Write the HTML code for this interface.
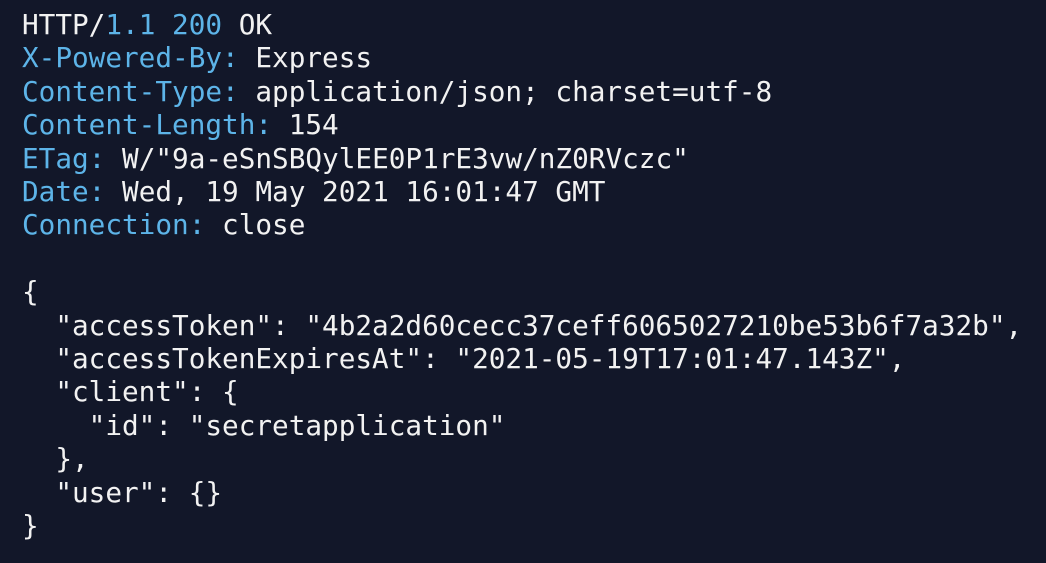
<!DOCTYPE html>
<html><head><meta charset="utf-8"><style>
html,body{margin:0;padding:0;background:#121729;width:1046px;height:563px;overflow:hidden}
pre{margin:0;position:absolute;left:22px;top:8px;font-family:"DejaVu Sans Mono","Liberation Mono",monospace;font-size:27.7px;line-height:33.4px;color:#f2f2f2;white-space:pre}
.b{color:#5db4e8}
</style></head><body><pre>HTTP/<span class="b">1.1</span> <span class="b">200</span> OK
<span class="b">X-Powered-By:</span> Express
<span class="b">Content-Type:</span> application/json; charset=utf-8
<span class="b">Content-Length:</span> 154
<span class="b">ETag:</span> W/"9a-eSnSBQylEE0P1rE3vw/nZ0RVczc"
<span class="b">Date:</span> Wed, 19 May 2021 16:01:47 GMT
<span class="b">Connection:</span> close

{
  "accessToken": "4b2a2d60cecc37ceff6065027210be53b6f7a32b",
  "accessTokenExpiresAt": "2021-05-19T17:01:47.143Z",
  "client": {
    "id": "secretapplication"
  },
  "user": {}
}</pre></body></html>
